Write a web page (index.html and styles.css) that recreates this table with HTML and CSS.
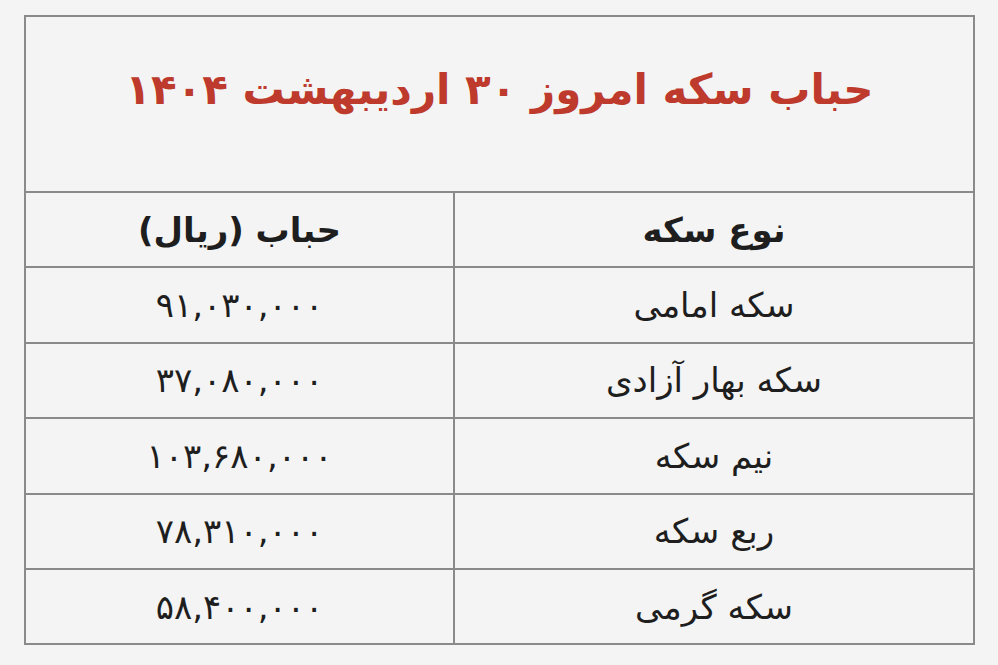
FILE: index.html
```html
<!DOCTYPE html>
<html lang="fa" dir="rtl">
<head>
<meta charset="utf-8">
<link rel="stylesheet" href="styles.css">
</head>
<body>
<table class="bubble-table">
  <tr class="title-row"><td colspan="2" class="title">حباب سکه امروز ۳۰ اردیبهشت ۱۴۰۴</td></tr>
  <tr class="head-row"><th class="col-name">نوع سکه</th><th class="col-val">حباب (ریال)</th></tr>
  <tr><td>سکه امامی</td><td>۹۱,۰۳۰,۰۰۰</td></tr>
  <tr><td>سکه بهار آزادی</td><td>۳۷,۰۸۰,۰۰۰</td></tr>
  <tr><td>نیم سکه</td><td>۱۰۳,۶۸۰,۰۰۰</td></tr>
  <tr><td>ربع سکه</td><td>۷۸,۳۱۰,۰۰۰</td></tr>
  <tr><td>سکه گرمی</td><td>۵۸,۴۰۰,۰۰۰</td></tr>
</table>
</body>
</html>
```
FILE: styles.css
```css
html, body {
  margin: 0;
  background: #f4f4f4;
}
body {
  padding: 15px 23px 0 24px;
  font-family: "DejaVu Sans", "Noto Sans", sans-serif;
  color: #1e1e1e;
}
.bubble-table {
  width: 951px;
  border-collapse: collapse;
  border: 2px solid #8a8a8a;
}
.bubble-table td, .bubble-table th {
  border: 2px solid #8a8a8a;
  text-align: center;
  font-size: 34px;
  font-weight: normal;
  height: 73.4px;
  padding: 0;
}
.bubble-table th {
  font-weight: bold;
  font-size: 34px;
}
.col-name {
  width: 518px;
}
.title-row td.title {
  height: 144px;
  padding-bottom: 30px;
  color: #bd3a2c;
  font-weight: bold;
  font-size: 42px;
}
```
